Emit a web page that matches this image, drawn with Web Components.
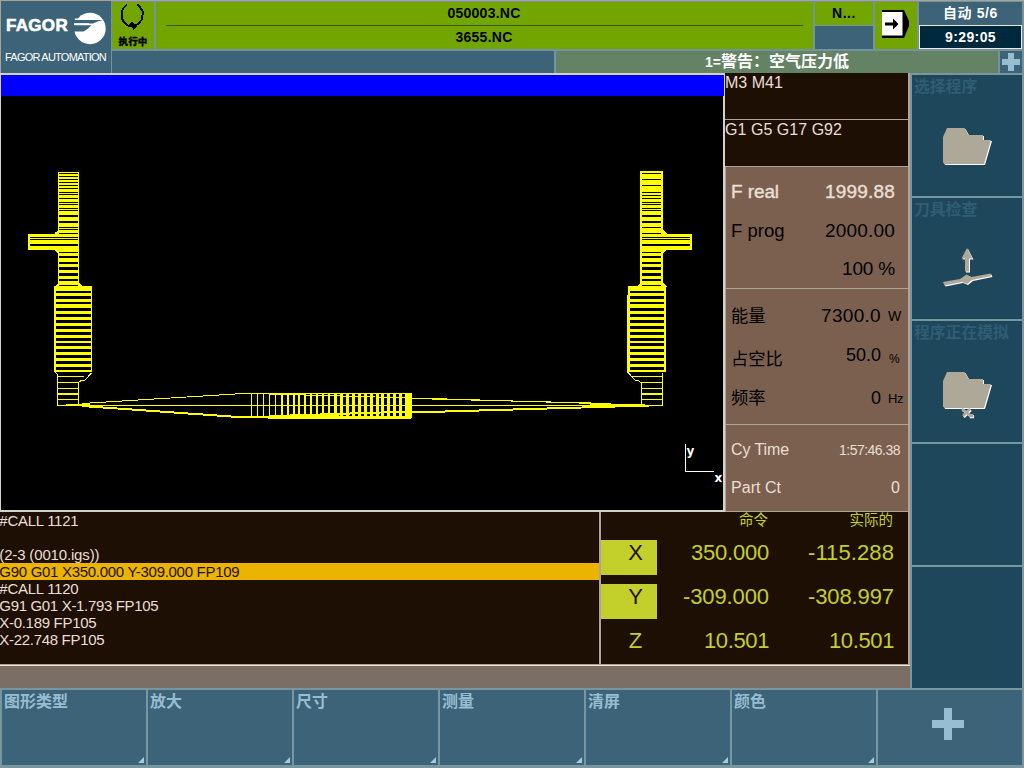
<!DOCTYPE html>
<html lang="zh-CN">
<head>
<meta charset="utf-8">
<title>FAGOR CNC</title>
<style>
html,body{margin:0;padding:0;background:#7896a0}
body{width:1024px;height:768px;overflow:hidden;font-family:"Liberation Sans","Noto Sans CJK SC",sans-serif}
</style>
</head>
<body>
<cnc-screen></cnc-screen>
<script>
const shadow=(el,html)=>{const r=el.attachShadow({mode:'open'});r.innerHTML=html;return r;};

/* Header strip: logo, status, program names, mode, clock and warning line */
customElements.define('cnc-logo',class extends HTMLElement{
  constructor(){super();shadow(this,`<style>
:host{display:block;background:#3c6377;width:110px;height:72px;color:#fff}
.top{display:flex;align-items:center;height:45px;padding:5px 0 0 5px;gap:6px;box-sizing:border-box}
.name{font:bold 17px/24px "Liberation Sans",sans-serif;-webkit-text-stroke:.6px #fff;padding-top:0;width:62px;white-space:nowrap}
.sub{font-size:11px;font-weight:normal;line-height:22px;padding-left:4px;white-space:nowrap}
svg{display:block;margin-top:5px}
</style>
<div class="top"><span class="name"><fit-text w="62">FAGOR</fit-text></span>
<svg width="32" height="34" viewBox="0 0 32 34"><circle cx="16" cy="16.500" r="15.7" fill="#fff"/>
<path d="M0 8.1H29Q23 9.6 19 11.4H0Z" fill="#3c6377"/><path d="M0 13.2H17.5Q13 18 9.5 19.6H0Z" fill="#3c6377"/><path d="M1 6.6H10V8.1H.6ZM0 11.2H15V13H0Z" fill="#fff"/></svg></div>
<div class="sub"><fit-text w="101">FAGOR AUTOMATION</fit-text></div>`);}
});

customElements.define('cnc-header',class extends HTMLElement{
  constructor(){super();shadow(this,`<style>
:host{display:flex;width:1024px;height:73px;box-sizing:border-box;border-top:1px solid #a9a393;border-left:1px solid #a9a393;background:#7393a0;gap:1px;font-weight:bold;color:#000}
.rest{width:912px;display:flex;flex-direction:column}
.r1{display:flex;gap:2px;height:48px;padding-top:1px;box-sizing:border-box;margin-bottom:2px}
.g{background:#73a500}
.st{width:42px;text-align:center}
.st svg{display:block}
.st div{font-size:9.5px;line-height:15px;height:15px;font-weight:900;-webkit-text-stroke:.3px #000}
.pg{width:657px;display:flex;flex-direction:column;align-items:center;font-size:14px}
.pg div{height:23px;line-height:23px;margin-right:1px}
.pg hr{margin:0;border:0;height:1px;width:637px;background:#3f5b12;flex:none}
.nn{width:58px;display:flex;flex-direction:column;gap:1px}
.nn .g{height:23px;line-height:23px;font-size:14px;text-align:center}
.nn .b{background:#3c6377;flex:1}
.bl{width:42px}
.bl svg{display:block}
.md{width:103px;color:#fff;text-align:center;font-size:14px}
.md .m{background:#3c6377;height:23px;line-height:23px}
.md .c{background:#00283c;border:1px solid #efe8da;height:22px;line-height:22px;margin-top:0}
.r2{display:flex;gap:2px;height:22px}
.r2 .a{width:442px;background:#3c6377}
.r2 .w{width:442px;background:#648264;color:#fff;text-align:center;font-size:16px;line-height:21px}
.r2 .w small{font-size:14px}
.r2 .p{width:22px;background:#3c6377}
.r2 svg{display:block}
</style>
<cnc-logo></cnc-logo>
<div class="rest">
<div class="r1">
 <div class="st g"><svg width="42" height="32" viewBox="112 2 42 32" fill="none" stroke="#000" stroke-width="2" shape-rendering="crispEdges"><path d="M127 4.5L123.500 8L121.500 12V18L124 22L128 25.500L134 26.500L138 24L141.500 20L142.500 15V11L140 7L137 4.500"/><path d="M132 22L137 26L133 30L132 26L128 25Z" fill="#000" stroke="none"/></svg><div><fit-text w="29">执行中</fit-text></div></div>
 <div class="pg g"><div><fit-text w="73">050003.NC</fit-text></div><hr><div><fit-text w="57">3655.NC</fit-text></div></div>
 <div class="nn"><div class="g"><fit-text w="24">N...</fit-text></div><div class="b"></div></div>
 <div class="bl g"><svg width="42" height="47" viewBox="875 2 42 47"><path d="M882 10H904L909 21V26L904 38H882Z"/><path d="M882 12H902.500V35.500H882Z" fill="#fff"/><path d="M885 22.500H893V18.500L898.500 24L893 29.500V25.500H885Z"/></svg></div>
 <div class="md"><div class="m"><fit-text w="55">自动 5/6</fit-text></div><div class="c"><fit-text w="51">9:29:05</fit-text></div></div>
</div>
<div class="r2"><div class="a"></div><div class="w"><small>1=</small>警告：空气压力低</div><div class="p"><svg width="22" height="22" viewBox="1000 51 22 22"><path d="M1008 53h6v6h6v6h-6v6h-6v-6h-6v-6h6z" fill="#97bdd2"/></svg></div></div>
</div>`);}
});

/* Tool-path plot */
customElements.define('cnc-plot',class extends HTMLElement{
  constructor(){super();
  const Y='#ffff00';let s='';
  const bar=(x,y,w,h,c=Y)=>{s+=`<rect x="${x.toFixed(2)}" y="${y.toFixed(2)}" width="${w.toFixed(2)}" height="${h.toFixed(2)}" fill="${c}"/>`;};
  const thin=[232,238],gapsBranch=[[252,6]];
  const body=[[394,6],[408,8],[427,7],[445,8],[462,9],[480,8],[497,9],[515,8],[533,8],[550,9],[567,9],[585,8],[602,9],[620,9]];
  const tower=(x0,gaps)=>gaps.forEach(([y,h])=>bar(x0,Math.round(160+y/3),19,Math.max(1,Math.round(h/3)),'#000'));
  /* left profile */
  bar(58,172,21,115);bar(28,234,40,16);bar(55,231.5,8,3);
  s+=`<path d="M54 234L58 230V234ZM54 249L58 254V249ZM58 283L54 287H83L79 283Z" fill="${Y}"/>`;
  bar(54,286,38,86);
  tower(59,[[40,3],[49,3],[58,3],[67,3],[76,3],[85,3],[97,3],[103,3],[115,3],[127,3],[133,3],[145,3],[151,3],[165,6],[183,6],[201,3],[207,3],[219,3],[276,3],[288,6],[305,6],[321,8],[339,8],[357,6],[375,3]]);
  thin.forEach(y=>bar(30,Math.round(160+y/3),48,1,'#000'));gapsBranch.forEach(()=>bar(30,244,48,2,'#000'));
  body.forEach(([y,h])=>bar(56,Math.round(160+y/3),35,Math.round(h/3),'#000'));
  s+=`<path d="M55.500 372L57.500 375V405.500H78.500V382.500L81 380.500L85 380L91.500 373" fill="none" stroke="${Y}"/>`;
  [[376,27],[382,22],[388,21],[393,21],[394,21],[399,21]].forEach(([y,w])=>bar(57,y,w,1));
  /* right profile */
  bar(640,171,23,116);bar(655,234,37,16);
  s+=`<path d="M663 230L667 234H663ZM663 254L667 249H663ZM640 283L636 287H667L663 283Z" fill="${Y}"/>`;
  bar(628,286,38,86);bar(627,295,1,77);
  tower(642,[[40,3],[58,3],[76,3],[97,3],[106,3],[115,3],[127,3],[133,3],[145,3],[151,3],[165,6],[183,6],[201,3],[219,3],[276,3],[288,6],[305,6],[321,8],[339,8],[357,6],[375,3]]);
  thin.forEach(y=>bar(642,Math.round(160+y/3),48,1,'#000'));bar(642,244,48,2,'#000');
  body.forEach(([y,h])=>bar(630,Math.round(160+y/3),34,Math.round(h/3),'#000'));
  s+=`<path d="M627.500 372L635 380L639 381L641.500 383V405.500H662.500V373" fill="none" stroke="${Y}"/>`;
  [[376,32],[382,22],[388,21],[393,21],[394,21],[399,21]].forEach(([y,w])=>bar(663-w,y,w,1));
  /* swept sections at the bottom */
  const line=(a,b,c,d,w=1)=>{s+=`<path d="M${a} ${b}L${c} ${d}" stroke="${Y}" stroke-width="${w}" fill="none"/>`;};
  line(82,403.5,243,393.5);line(243,393.5,411,393.5);line(66,404.5,90,404.5);
  line(57,405.5,645,405.5);
  line(82,406,245,417.5,2);line(245,417,411,417,2);line(268,418.5,411,418.5);
  line(268,394,411,398);line(411,398.500,611,403.500);line(430,398.5,611,404);
  line(290,415.5,411,411.5,2);line(270,416.5,340,414.5,2);line(411,412.5,650,405.5,2);line(590,405,645,404.5,2);
  for(let i=0;i<27;i++){const w=i<5?1:i<14?(i%3==2?1.6:2):i<19?2.6:3.2;bar(251+i*5.93,393,Math.round(w),25);}
  bar(407,393,5,25);
  shadow(this,`<style>
:host{display:block;width:725px;height:439px;box-sizing:border-box;border:solid #d6d2c6;border-width:2px 2px 2px 1px;background:#000}
.t{height:21px;background:#00f;margin-right:-1px}svg{display:block}
text{font:bold 12px "DejaVu Sans",sans-serif;fill:#fff}
</style><div class="t"></div><svg width="722" height="414" viewBox="1 96 722 414" shape-rendering="crispEdges">${s}
<path d="M685.500 444V471.500H714" stroke="#fff" fill="none"/><text x="686.500" y="455">y</text><text x="714.500" y="482">x</text></svg>`);}
});

/* Right-hand readings */
customElements.define('cnc-readings',class extends HTMLElement{
  constructor(){super();shadow(this,`<style>
:host{display:flex;flex-direction:column;width:183px;height:439px;color:#eadfd2;font-size:16px;background:#b0a498}
.d{background:#1e0f05;height:46px;margin-bottom:1px;line-height:19px}
.d.m{line-height:20px}
.p{background:#7b6050;margin-left:1px;margin-bottom:1px;box-sizing:border-box}
.r{display:flex;align-items:center;padding:0 13px 0 5px;white-space:nowrap}
.r>:first-child{flex:1}
.k{color:#000}.r.b{font-size:19px}
.bd{-webkit-text-stroke:.4px currentColor}
.clip{display:block;overflow:hidden}.clip span{display:block;width:53px;overflow:hidden;line-height:28px;font-size:18.500px}
.l{font-size:17.3px;padding-bottom:3px}.u{width:20px;font-size:13px;margin-left:7px}
.v{font-size:19px}
</style>
<div class="d m">M3 M41</div><div class="d"><fit-text w="117">G1 G5 G17 G92</fit-text></div>
<div class="p" style="height:121px;padding-top:7px">
 <div class="r b bd" style="height:35px"><span><fit-text w="48">F real</fit-text></span><fit-text w="70">1999.88</fit-text></div>
 <div class="r b k" style="height:44px"><span class="clip"><span>F prog</span></span><fit-text w="70">2000.00</fit-text></div>
 <div class="r b k" style="height:31px"><span></span><fit-text w="53">100 %</fit-text></div>
</div>
<div class="p k" style="height:135px">
 <div class="r" style="height:54px;padding-right:0"><span class="l">能量</span><fit-text class="v" w="60">7300.0</fit-text><span class="u" style="font-size:14px">W</span></div>
 <div class="r" style="height:32px;padding-right:0"><span class="l">占空比</span><fit-text class="v" w="35" style="padding-bottom:8px;font-size:18px">50.0</fit-text><span class="u" style="font-size:12px;width:19px;margin-left:8px">%</span></div>
 <div class="r" style="height:46px;padding-right:0"><span class="l">频率</span><span class="v" style="font-size:18px">0</span><span class="u"><fit-text w="15">Hz</fit-text></span></div>
</div>
<div class="p" style="height:86px">
 <div class="r" style="height:49px;padding-right:8px"><span><fit-text w="58">Cy Time</fit-text></span><fit-text w="61" style="font-size:14px">1:57:46.38</fit-text></div>
 <div class="r" style="height:27px;padding-right:8px"><span><fit-text w="50">Part Ct</fit-text></span><span>0</span></div>
</div>`);}
});

/* Program listing */
customElements.define('cnc-code',class extends HTMLElement{
  constructor(){super();
  const rows=[['#CALL 1121',79],['',0],['(2-3 (0010.igs))',100],['G90 G01 X350.000 Y-309.000 FP109',240,1],['#CALL 1120',79],['G91 G01 X-1.793 FP105',159],['X-0.189 FP105',97],['X-22.748 FP105',105]];
  shadow(this,`<style>:host{display:block;width:599px;background:#1e0f05;color:#eadfd2;font-size:15px}
div{height:17px;line-height:18px;white-space:nowrap}fit-text{margin-left:-.7px}.on{background:#ebb400;color:#1e0f05}</style>`+
  rows.map(([t,w,o])=>`<div${o?' class="on"':''}>${t?`<fit-text w="${w}">${t}</fit-text>`:''}</div>`).join(''));}
});

/* Axis positions */
customElements.define('cnc-axes',class extends HTMLElement{
  constructor(){super();
  const rows=[['X','350.000',78,'-115.288',86,1],['Y','-309.000',86,'-308.997',86,1],['Z','10.501',65,'10.501',65]];
  shadow(this,`<style>:host{display:flex;flex-direction:column;gap:9px;width:307px;background:#1e0f05;color:#c3cf2a;font-size:22px}
.r{display:grid;grid-template-columns:56px 112px 125px;height:35px;line-height:25px;text-align:right}
.h{font-size:14.500px;height:19px;line-height:16px}.h span{padding-right:1px}
.n{text-align:center;padding-left:13px}.on{background:#c3cf2a;color:#1e0f05}
</style><div class="r h"><span></span><span>命令</span><span>实际的</span></div>`+
  rows.map(r=>`<div class="r"><span class="n${r[5]?' on':''}">${r[0]}</span><span><fit-text w="${r[2]}">${r[1]}</fit-text></span><span><fit-text w="${r[4]}">${r[3]}</fit-text></span></div>`).join(''));}
});

/* Vertical and horizontal softkeys */
customElements.define('side-key',class extends HTMLElement{
  constructor(){super();
  const folder=`M943 137L947 128H964.500L968.500 135H983V140H991L984 164H944.500L943 162.500Z`;
  const cut=`M967 248L972.500 258.500H969V271.500H965V258.500H961.500ZM943 282L960 279L966.500 274.500L971.500 277L990.500 273.500L991.500 276L972 280L967 284L962 282L944.500 285.500Z`;
  const x=`<path d="M962 409L971 416M970 409L963 416M969 416H972V414" fill="none" stroke-width="2.500"`;
  const g=(d,dy)=>`<svg width="54" height="90" viewBox="940 ${dy} 54 90"><g fill="#fff" transform="translate(1 1)"><path d="${d}"/></g><path fill="#aea899" d="${d}"/></svg>`;
  const icons={folder:g(folder,97),cut:g(cut,220),sim:`<svg width="54" height="90" viewBox="940 343 54 90"><path transform="translate(1 245)" fill="#fff" d="${folder}"/><path transform="translate(0 244)" fill="#aea899" d="${folder}"/><g transform="translate(.8 1)">${x} stroke="#fff"/></g>${x} stroke="#aea899"/></svg>`};
  shadow(this,`<style>:host{display:flex;flex-direction:column;background:#1e475b;color:#315d73;font:bold 15.800px/24px "Liberation Sans","Noto Sans CJK SC",sans-serif}
div{height:22px;padding-left:2px;white-space:nowrap}svg{display:block;margin:0 28px}</style><div><slot></slot></div>${icons[this.getAttribute('icon')]||''}`);}
});
customElements.define('soft-key',class extends HTMLElement{
  constructor(){super();
  const plus=this.hasAttribute('plus');
  shadow(this,`<style>:host{display:flex;flex-direction:column;justify-content:${plus?'center':'space-between'};align-items:${plus?'center':'stretch'};background:#3c6377;color:#97bdd2;font:bold 16px/24px "Liberation Sans","Noto Sans CJK SC",sans-serif}
div{padding-left:2px}svg{display:block}.c{align-self:flex-end;margin:0 2px 2px 0}.p{margin:-7px 0 0 -4px}</style>`+
  (plus?`<svg class="p" width="32" height="32"><path d="M12 0h8v12h12v8H20v12h-8V20H0v-8h12z" fill="#97bdd2"/></svg>`:
  `<div><slot></slot></div><svg class="c" width="6" height="6"><path d="M6 0V6H0Z" fill="#a4c8dc"/></svg>`));}
});

customElements.define('cnc-screen',class extends HTMLElement{
  constructor(){super();shadow(this,`<style>
:host{display:block;width:1024px;height:768px;background:#7896a0}
.mid{display:flex;height:615px}
.left{width:910px;background:#b0a498}
.up{display:flex;height:439px}
.lo{display:flex;gap:2px;height:152px;width:908px}
.bar{height:22px;margin-top:1px;border-top:1px solid #efe8da;background:#7a6e65}
.side{display:grid;grid-template-rows:repeat(5,121px);gap:2px;width:110px;padding:2px 2px 0 2px}
.keys{display:grid;grid-template-columns:repeat(7,144px);gap:2px;padding:2px 2px;height:75px}
</style>
<cnc-header></cnc-header>
<div class="mid"><div class="left">
<div class="up"><cnc-plot></cnc-plot><cnc-readings></cnc-readings></div>
<div class="lo"><cnc-code></cnc-code><cnc-axes></cnc-axes></div>
<div class="bar"></div></div>
<div class="side"><side-key icon="folder">选择程序</side-key><side-key icon="cut">刀具检查</side-key><side-key icon="sim">程序正在模拟</side-key><side-key></side-key><side-key></side-key></div></div>
<div class="keys"><soft-key>图形类型</soft-key><soft-key>放大</soft-key><soft-key>尺寸</soft-key><soft-key>测量</soft-key><soft-key>清屏</soft-key><soft-key>颜色</soft-key><soft-key plus></soft-key></div>`);}
});

/* Text run tracked to a fixed width given in w */
customElements.define('fit-text',class extends HTMLElement{
  constructor(){super();shadow(this,`<style>:host{display:inline-block;white-space:nowrap}span{display:inline-block}</style><span><slot></slot></span>`);}
  connectedCallback(){
    const s=this.shadowRoot.querySelector('span'),n=[...this.textContent].length,w=+this.getAttribute('w');
    const ls=(w-s.getBoundingClientRect().width)/n;
    s.style.letterSpacing=ls.toFixed(3)+'px';
  }
});
</script>
</body>
</html>
